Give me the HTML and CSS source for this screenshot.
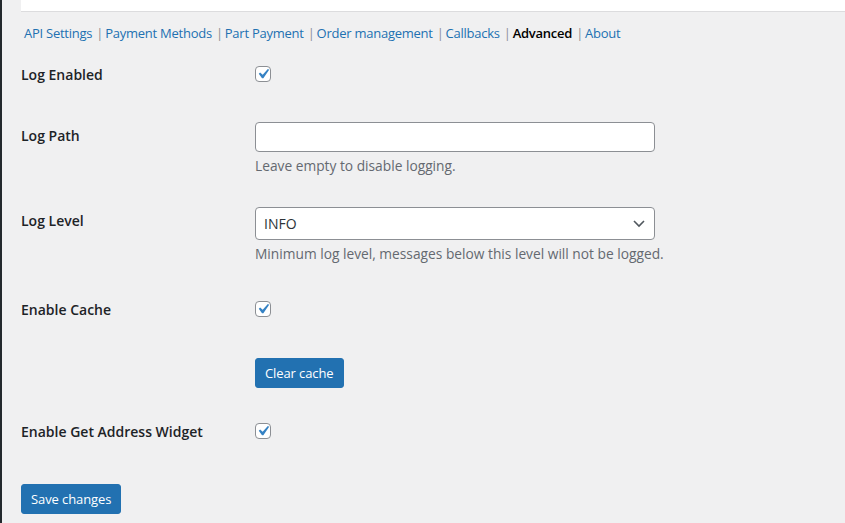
FILE: index.html
```html
<!DOCTYPE html>
<html>
<head>
<meta charset="utf-8">
<link rel="stylesheet" href="styles.css">
</head>
<body>
<div class="page">
  <div class="topbox"></div>
  <ul class="tabs">
    <li><a href="#">API Settings</a><span class="sep">|</span></li>
    <li><a href="#">Payment Methods</a><span class="sep">|</span></li>
    <li><a href="#">Part Payment</a><span class="sep">|</span></li>
    <li><a href="#">Order management</a><span class="sep">|</span></li>
    <li><a href="#">Callbacks</a><span class="sep">|</span></li>
    <li><a href="#" class="current">Advanced</a><span class="sep">|</span></li>
    <li><a href="#">About</a></li>
  </ul>
  <form class="settings">
    <div class="row row-log-enabled">
      <div class="label">Log Enabled</div>
      <div class="field"><span class="check"><svg viewBox="0 0 20 20" width="20" height="20"><path d="M14.83 4.89l1.34.94-5.81 8.38H9.02L5.78 9.67l1.34-1.25 2.57 2.4z" fill="#3582c4"/></svg></span></div>
    </div>
    <div class="row row-log-path">
      <div class="label label-input">Log Path</div>
      <div class="field">
        <div class="textinput"></div>
        <p class="desc">Leave empty to disable logging.</p>
      </div>
    </div>
    <div class="row row-log-level">
      <div class="label label-input">Log Level</div>
      <div class="field">
        <div class="select"><span>INFO</span><svg viewBox="0 0 12 8" width="12" height="8"><polyline points="1,1 6,6 11,1" fill="none" stroke="#50575e" stroke-width="1.6"/></svg></div>
        <p class="desc">Minimum log level, messages below this level will not be logged.</p>
      </div>
    </div>
    <div class="row row-cache">
      <div class="label">Enable Cache</div>
      <div class="field"><span class="check"><svg viewBox="0 0 20 20" width="20" height="20"><path d="M14.83 4.89l1.34.94-5.81 8.38H9.02L5.78 9.67l1.34-1.25 2.57 2.4z" fill="#3582c4"/></svg></span></div>
    </div>
    <div class="row row-clear">
      <div class="label"></div>
      <div class="field"><button type="button" class="btn">Clear cache</button></div>
    </div>
    <div class="row row-widget">
      <div class="label">Enable Get Address Widget</div>
      <div class="field"><span class="check"><svg viewBox="0 0 20 20" width="20" height="20"><path d="M14.83 4.89l1.34.94-5.81 8.38H9.02L5.78 9.67l1.34-1.25 2.57 2.4z" fill="#3582c4"/></svg></span></div>
    </div>
    <div class="submit"><button type="button" class="btn btn-save">Save changes</button></div>
  </form>
</div>
</body>
</html>
```
FILE: styles.css
```css
html, body {
  margin: 0;
  padding: 0;
  height: 100%;
  background: #f0f0f1;
  overflow: hidden;
}
body {
  font-family: "Open Sans", "Noto Sans", sans-serif;
  color: #1d2327;
  font-size: 13px;
  border-left: 2px solid #23282d;
  box-sizing: border-box;
}
.page {
  padding-left: 19px;
}
.topbox {
  height: 11px;
  background: #fff;
  border-bottom: 1px solid #dcdcde;
}
.tabs {
  list-style: none;
  margin: 12px 0 0 3px;
  padding: 0;
  display: flex;
  font-size: 13px;
  line-height: 18px;
  letter-spacing: -0.25px;
}
.tabs a {
  color: #2271b1;
  text-decoration: none;
}
.tabs a.current {
  color: #000;
  font-weight: 600;
}
.sep {
  color: #8c8f94;
  margin: 0 2px 0 4px;
}
.settings {
  margin-top: 23px;
}
.row {
  display: grid;
  grid-template-columns: 234px 1fr;
  align-items: start;
}
.label {
  font-size: 14px;
  font-weight: 600;
  line-height: 18px;
  padding-top: 1px;
}
.label-input {
  padding-top: 5px;
}
.check {
  display: block;
  position: relative;
  width: 14px;
  height: 14px;
  margin-top: 1px;
  border: 1px solid #8c8f94;
  border-radius: 4px;
  background: #fff;
}
.check svg {
  position: absolute;
  left: -3px;
  top: -3px;
}
.textinput {
  width: 398px;
  height: 28px;
  border: 1px solid #8c8f94;
  border-radius: 4px;
  background: #fff;
}
.select {
  height: 31px;
  border: 1px solid #8c8f94;
  border-radius: 4px;
  background: #fff;
  display: flex;
  align-items: center;
  justify-content: space-between;
  padding: 0 9px 0 8px;
  width: 381px;
  font-size: 14px;
  color: #2c3338;
}
.desc {
  margin: 5px 0 0;
  line-height: 18px;
  color: #646970;
  font-size: 13.75px;
}
.row-log-path { margin-top: 38px; }
.row-log-level { margin-top: 32px; }
.row-cache { margin-top: 37px; }
.row-clear { margin-top: 39px; }
.row-widget { margin-top: 34px; }
.btn {
  background: #2271b1;
  border: 1px solid #2271b1;
  color: #fff;
  border-radius: 3px;
  font-family: inherit;
  font-size: 13px;
  height: 30px;
  padding: 0 9px;
  line-height: 28px;
  letter-spacing: -0.1px;
}
.submit {
  margin-top: 43px;
}
```
